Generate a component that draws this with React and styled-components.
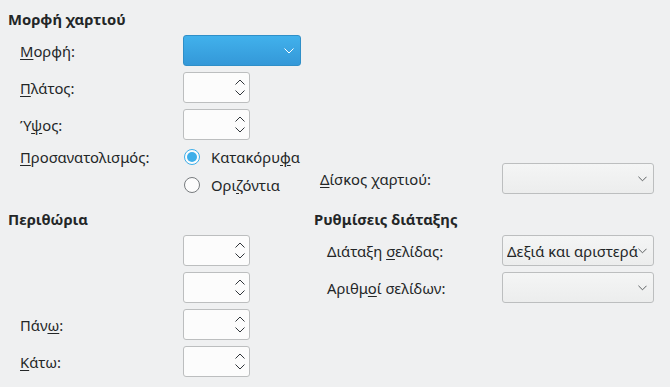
import React from 'react'
import styled, { createGlobalStyle } from 'styled-components'

const Global = createGlobalStyle`
  html, body {
    margin: 0;
    background: #eff0f1;
  }
  body {
    font-family: "Noto Sans", "DejaVu Sans", sans-serif;
    font-size: 14.8px;
    color: #232627;
  }
`

const Page = styled.div`
  width: 670px;
  height: 387px;
  overflow: hidden;
  padding-top: 9px;
  box-sizing: border-box;
`

const Heading = styled.div`
  font-weight: bold;
  line-height: 20px;
  height: 20px;
  margin-bottom: 6px;
  white-space: nowrap;
`

const TopSection = styled.section`
  padding-left: 8px;
`

const TopGrid = styled.div`
  display: grid;
  grid-template-columns: 163px 137px 182px 152px;
  grid-template-rows: 31px 31px 31px 22px 22px;
  row-gap: 6px;
  margin-left: 12px;
`

const Label = styled.div`
  display: flex;
  align-items: center;
  white-space: nowrap;
  grid-column: ${p => p.$col || 'auto'};
  grid-row: ${p => p.$row || 'auto'};
  align-self: ${p => p.$end ? 'end' : 'stretch'};
  height: ${p => p.$end ? '31px' : 'auto'};
  margin-bottom: ${p => p.$end ? '2px' : '0'};
`

const Cell = styled.div`
  grid-column: ${p => p.$col || 'auto'};
  grid-row: ${p => p.$row || 'auto'};
  align-self: ${p => p.$end ? 'end' : 'stretch'};
  margin-bottom: ${p => p.$end ? '2px' : '0'};
  display: flex;
  align-items: center;
`

const Mn = styled.span`
  text-decoration: underline;
  text-underline-offset: 2px;
`

const Combo = styled.div`
  box-sizing: border-box;
  width: ${p => p.$w}px;
  height: 31px;
  border-radius: 3px;
  border: 1px solid ${p => p.$active ? '#2f8fc8' : '#bcbebf'};
  background: ${p => p.$active
    ? 'linear-gradient(#41b1ec, #3498d8)'
    : 'linear-gradient(#f4f5f5, #eceded)'};
  display: flex;
  align-items: center;
  padding: 0 6px 0 4px;
  overflow: hidden;
`

const ComboText = styled.span`
  flex: 1;
  min-width: 0;
  white-space: nowrap;
  overflow: hidden;
  color: #232627;
`

const Spin = styled.div`
  box-sizing: border-box;
  width: 67px;
  height: 31px;
  border: 1px solid #bcbebf;
  border-radius: 3px;
  background: #fcfcfc;
  display: flex;
  justify-content: flex-end;
  align-items: center;
  padding-right: 4px;
`

const RadioRow = styled.label`
  display: flex;
  align-items: center;
  gap: 11px;
  white-space: nowrap;
  margin-left: 1px;
`

const RadioDot = styled.span`
  box-sizing: border-box;
  width: 16px;
  height: 16px;
  border-radius: 50%;
  border: 1px solid ${p => p.$on ? '#3daee9' : '#777b7e'};
  background: #fcfcfc;
  display: flex;
  align-items: center;
  justify-content: center;
  &::after {
    content: '';
    width: 10px;
    height: 10px;
    border-radius: 50%;
    background: ${p => p.$on ? '#3daee9' : 'transparent'};
  }
`

const BottomSection = styled.section`
  display: flex;
  margin-top: 13px;
`

const LeftCol = styled.div`
  width: 314px;
  padding-left: 8px;
  box-sizing: border-box;
`

const RightCol = styled.div`
  flex: 1;
`

const FormGrid = styled.div`
  display: grid;
  grid-template-columns: ${p => p.$cols};
  grid-auto-rows: 31px;
  row-gap: 6px;
  margin-left: ${p => p.$indent}px;
`

const Chevron = ({ up, color = '#31363b', w = 10 }) => (
  <svg width={w} height={6} viewBox="0 0 10 6" style={{ display: 'block', flexShrink: 0 }}>
    <path
      d={up ? 'M0.5 5.5 L5 1 L9.5 5.5' : 'M0.5 0.5 L5 5 L9.5 0.5'}
      fill="none"
      stroke={color}
      strokeWidth="1"
    />
  </svg>
)

const Arrows = styled.div`
  display: flex;
  flex-direction: column;
  gap: 5px;
`

function SpinBox() {
  return (
    <Spin>
      <Arrows>
        <Chevron up />
        <Chevron />
      </Arrows>
    </Spin>
  )
}

function ComboBox({ width = 152, active, text }) {
  return (
    <Combo $w={width} $active={active}>
      <ComboText>{text}</ComboText>
      <Chevron color={active ? '#ffffff' : '#4d5154'} w={active ? 10 : 9} />
    </Combo>
  )
}

export default function App() {
  return (
    <Page>
      <Global />
      <TopSection>
        <Heading>Μορφή χαρτιού</Heading>
        <TopGrid>
          <Label $col="1" $row="1"><span><Mn>Μ</Mn>ορφή:</span></Label>
          <Cell $col="2" $row="1"><ComboBox width={118} active /></Cell>
          <Label $col="1" $row="2"><span><Mn>Π</Mn>λάτος:</span></Label>
          <Cell $col="2" $row="2"><SpinBox /></Cell>
          <Label $col="1" $row="3"><span>Ύ<Mn>ψ</Mn>ος:</span></Label>
          <Cell $col="2" $row="3"><SpinBox /></Cell>
          <Label $col="1" $row="4"><span><Mn>Π</Mn>ροσανατολισμός:</span></Label>
          <Cell $col="2" $row="4">
            <RadioRow><RadioDot $on /><span>Κατακόρυ<Mn>φ</Mn>α</span></RadioRow>
          </Cell>
          <Cell $col="2" $row="5">
            <RadioRow><RadioDot /><span>Ορι<Mn>ζ</Mn>όντια</span></RadioRow>
          </Cell>
          <Label $col="3" $row="4 / 6" $end><span><Mn>Δ</Mn>ίσκος χαρτιού:</span></Label>
          <Cell $col="4" $row="4 / 6" $end><ComboBox /></Cell>
        </TopGrid>
      </TopSection>
      <BottomSection>
        <LeftCol>
          <Heading>Περιθώρια</Heading>
          <FormGrid $cols="163px 67px" $indent={12}>
            <Label />
            <Cell><SpinBox /></Cell>
            <Label />
            <Cell><SpinBox /></Cell>
            <Label><span>Πάν<Mn>ω</Mn>:</span></Label>
            <Cell><SpinBox /></Cell>
            <Label><span><Mn>Κ</Mn>άτω:</span></Label>
            <Cell><SpinBox /></Cell>
          </FormGrid>
        </LeftCol>
        <RightCol>
          <Heading>Ρυθμίσεις διάταξης</Heading>
          <FormGrid $cols="175px 152px" $indent={13}>
            <Label><span>Διάταξη <Mn>σ</Mn>ελίδας:</span></Label>
            <Cell><ComboBox text="Δεξιά και αριστερά" /></Cell>
            <Label><span>Αριθμ<Mn>ο</Mn>ί σελίδων:</span></Label>
            <Cell><ComboBox /></Cell>
          </FormGrid>
        </RightCol>
      </BottomSection>
    </Page>
  )
}
